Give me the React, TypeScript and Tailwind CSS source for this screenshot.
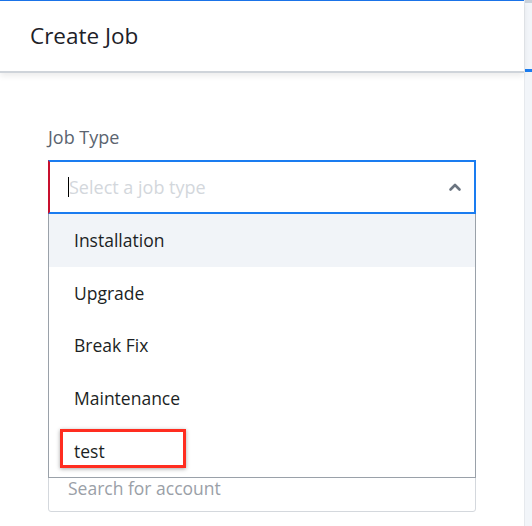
import React from "react";

const font = { fontFamily: '"Open Sans", "Liberation Sans", sans-serif' };

export default function App() {
  const items = ["Installation", "Upgrade", "Break Fix", "Maintenance", "test"];
  return (
    <div className="w-[532px] h-[526px] flex bg-white overflow-hidden" style={font}>
      <div className="w-[524px] flex flex-col">
        <div className="h-[73px] shrink-0 border-t border-[#1a73e8] border-b-2 border-b-[#cfd4da] bg-white flex items-center pl-[30px] shadow-[0_3px_6px_rgba(0,0,0,0.08)] z-10">
          <span className="text-[22.5px] text-[#1d2128] leading-none">Create Job</span>
        </div>
        <div className="flex-1 px-[48px] pt-[53px] relative">
          <div className="text-[18px] text-[#5b6470] leading-[22px] mb-[12px]">Job Type</div>
          <div className="relative w-[428px]">
            <div className="h-[54px] border-2 border-[#1a7cf0] border-l-[#c8102e] flex items-center pl-[18px] pr-[12px]">
              <span className="w-px h-[20px] bg-black"></span>
              <span className="text-[18px] text-[#d3d7dc] flex-1">Select a job type</span>
              <svg width="14" height="10" viewBox="0 0 14 10">
                <path d="M2.5 7.5 L7 3 L11.5 7.5" fill="none" stroke="#6b7480" strokeWidth="2.6" strokeLinecap="round" strokeLinejoin="round" />
              </svg>
            </div>
            <div className="absolute left-0 right-0 top-[54px] z-20 bg-white border border-t-0 border-[#9aa1a9] flex flex-col">
              {items.map((it, i) => (
                <div
                  key={it}
                  className={
                    "h-[52.6px] flex items-center pl-[25px] text-[17.5px] text-[#1c1f24] " +
                    (i === 0 ? "bg-[#f1f4f8]" : "bg-white")
                  }
                >
                  {it}
                </div>
              ))}
            </div>
            <div className="absolute left-[12px] top-[269px] w-[126px] h-[39px] border-[3px] border-[#ff2d20] shadow-[0_1px_4px_rgba(0,0,0,0.35)] z-30"></div>
          </div>
          <div className="h-[244px]"></div>
          <div className="w-[428px] h-[54px] border border-[#d4d8dd] rounded-[3px] flex items-center pl-[19px]">
            <span className="text-[17.5px] text-[#9aa0a7] translate-y-[3px]">Search for account</span>
          </div>
        </div>
      </div>
      <div className="w-px bg-[#e6e9ed]"></div>
      <div className="flex-1 bg-[#f2f5f9] flex flex-col">
        <div className="h-[3px] bg-[#c9d1da]"></div>
        <div className="h-[66px]"></div>
        <div className="h-[3px] bg-[#1a7cf0]"></div>
      </div>
    </div>
  );
}
